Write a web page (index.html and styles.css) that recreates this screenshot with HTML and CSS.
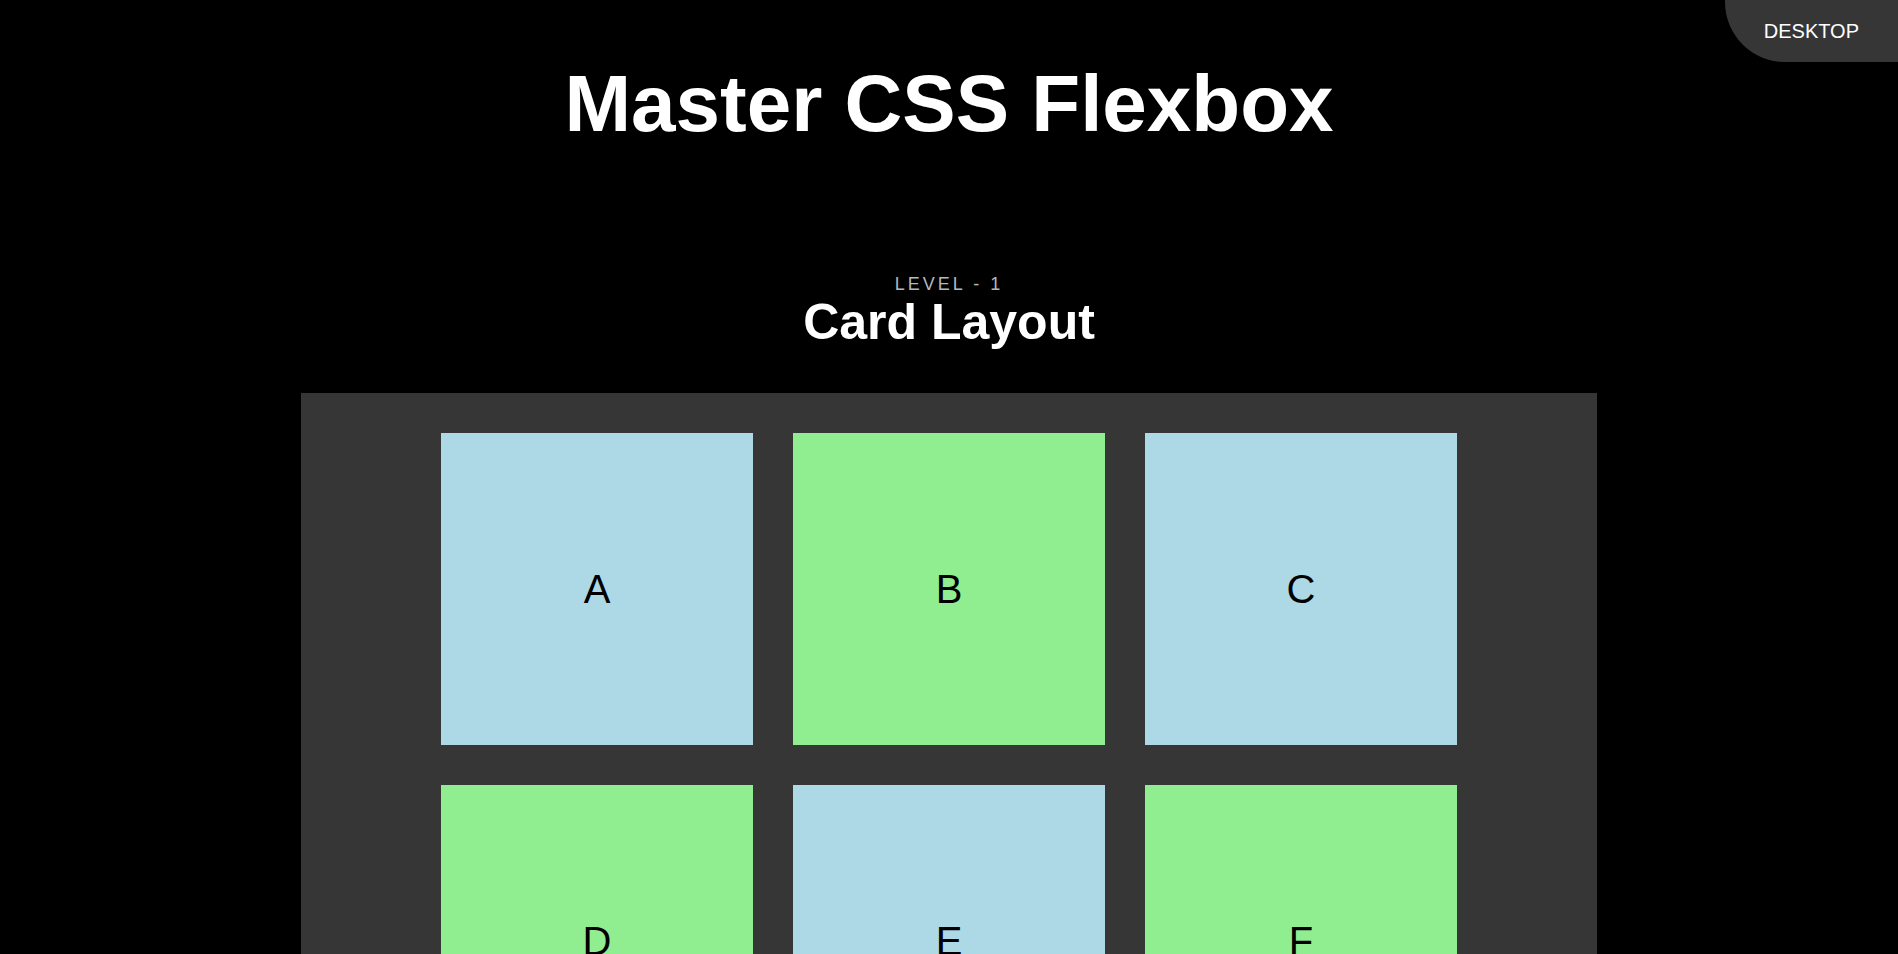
FILE: index.html
```html
<!DOCTYPE html>
<html lang="en">
<head>
<meta charset="utf-8">
<title>Master CSS Flexbox</title>
<link rel="stylesheet" href="styles.css">
</head>
<body>
  <div class="badge">DESKTOP</div>
  <header class="header">
    <h1 class="title">Master CSS Flexbox</h1>
  </header>
  <section class="level">
    <p class="level-label">LEVEL - 1</p>
    <h2 class="level-title">Card Layout</h2>
    <div class="board">
      <div class="card blue">A</div>
      <div class="card green">B</div>
      <div class="card blue">C</div>
      <div class="card green">D</div>
      <div class="card blue">E</div>
      <div class="card green">F</div>
    </div>
  </section>
</body>
</html>
```
FILE: styles.css
```css
* { box-sizing: border-box; }

body {
  margin: 0;
  background: #000;
  color: #fff;
  font-family: "Liberation Sans", Arial, sans-serif;
}

.badge {
  position: fixed;
  top: 0;
  right: 0;
  padding: 20px 39px;
  font-size: 20px;
  line-height: 22px;
  background: #363636;
  color: #fff;
  border-bottom-left-radius: 60px;
}

.header {
  padding-top: 58px;
  text-align: center;
}

.title {
  margin: 0;
  font-size: 80px;
  line-height: 92px;
  font-weight: 700;
}

.level {
  margin-top: 124px;
  text-align: center;
}

.level-label {
  margin: 0;
  font-size: 18px;
  line-height: 20px;
  letter-spacing: 3px;
  color: #b4b8bc;
}

.level-title {
  margin: 3px 0 0;
  font-size: 50px;
  line-height: 50px;
  font-weight: 700;
}

.board {
  width: 1296px;
  margin: 46px auto 0;
  padding: 40px 140px;
  background: #363636;
  display: flex;
  flex-wrap: wrap;
  gap: 40px;
}

.card {
  width: 312px;
  height: 312px;
  display: flex;
  align-items: center;
  justify-content: center;
  font-size: 40px;
  color: #000;
}

.blue { background: #add8e6; }
.green { background: #90ee90; }
```
